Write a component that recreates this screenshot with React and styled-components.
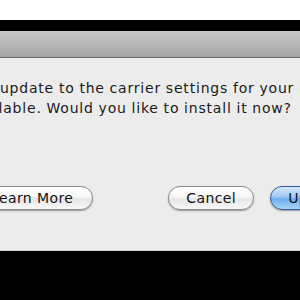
import React from "react";
import styled, { createGlobalStyle } from "styled-components";

const Global = createGlobalStyle`
  html, body { margin: 0; padding: 0; background: #ffffff; overflow: hidden; width: 300px; height: 300px; }
  #root { width: 300px; height: 300px; overflow: hidden; }
`;

const Page = styled.div`
  width: 300px;
  height: 300px;
  display: flex;
  flex-direction: column;
  background: #fff;
`;

const Spacer = styled.div`
  height: ${(p) => p.$h}px;
  background: ${(p) => p.$bg};
  flex-shrink: 0;
`;

const TitleBar = styled.div`
  height: 26px;
  flex-shrink: 0;
  background: linear-gradient(#cacaca, #a3a3a3);
  border-bottom: 1px solid #6c6c6c;
`;

const Body = styled.div`
  height: 172px;
  flex-shrink: 0;
  background: #ececec;
  border-bottom: 1px solid #d4d4d4;
  display: flex;
  flex-direction: column;
  padding-top: 20px;
  box-sizing: content-box;
  font-family: "DejaVu Sans", "Liberation Sans", sans-serif;
  font-size: 14px;
  color: #1a1a1a;
`;

const Message = styled.p`
  margin: 0 0 0 -34px;
  text-indent: 9px;
  line-height: 20px;
  letter-spacing: 0.8px;
  word-spacing: -0.4px;
  white-space: nowrap;
`;

const Buttons = styled.div`
  display: flex;
  align-items: center;
  margin-top: 68px;
  margin-left: -29px;
  white-space: nowrap;
`;

const Button = styled.button`
  height: 24px;
  box-sizing: border-box;
  padding: 0 ${(p) => p.$pad}px;
  border-radius: 12px;
  font-family: "DejaVu Sans", "Liberation Sans", sans-serif;
  font-size: 14px;
  letter-spacing: 0.4px;
  color: #111;
  border: 1px solid ${(p) => (p.$primary ? "#2f5d99" : "#8a8a8a")};
  background: ${(p) =>
    p.$primary
      ? "linear-gradient(#d5e9fb 0%, #9cc8f3 45%, #6eaeee 55%, #a9d6fb 100%)"
      : "linear-gradient(#ffffff 0%, #f6f6f6 45%, #e6e6e6 55%, #f8f8f8 100%)"};
  box-shadow: 0 1px 1.5px rgba(0, 0, 0, 0.35);
  margin-left: ${(p) => p.$ml || 0}px;
  flex-shrink: 0;
`;

export default function App() {
  return (
    <Page>
      <Global />
      <Spacer $h={20} $bg="#ffffff" />
      <Spacer $h={11} $bg="#000000" />
      <TitleBar />
      <Body>
        <Message>
          An update to the carrier settings for your iPhone is
          <br />
          available. Would you like to install it now?
        </Message>
        <Buttons>
          <Button $pad={19}>Learn More</Button>
          <Button $pad={17} $ml={75}>Cancel</Button>
          <Button $pad={17} $ml={16} $primary>Update</Button>
        </Buttons>
      </Body>
      <Spacer $h={56} $bg="#000000" />
    </Page>
  );
}
